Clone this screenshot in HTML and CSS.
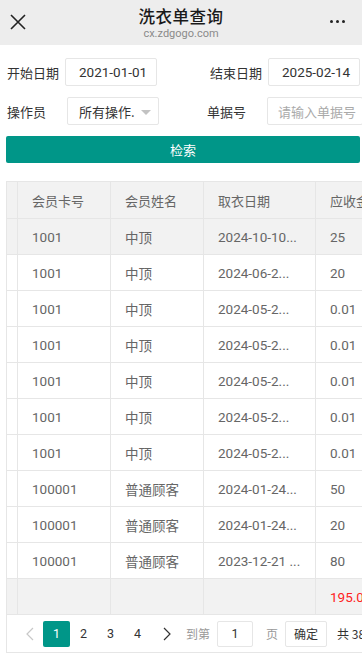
FILE: index.html
```html
<!DOCTYPE html>
<html lang="zh">
<head>
<meta charset="utf-8">
<title>洗衣单查询</title>
<link rel="stylesheet" href="styles.css">
</head>
<body>
<header class="topbar">
  <span class="close">
    <svg width="16" height="16" viewBox="0 0 16 16"><path d="M1 1 L15 15 M15 1 L1 15" stroke="#222" stroke-width="1.6" fill="none"/></svg>
  </span>
  <div class="titles">
    <div class="title">洗衣单查询</div>
    <div class="sub">cx.zdgogo.com</div>
  </div>
  <span class="more"><i></i><i></i><i></i></span>
</header>

<main class="page">
  <div class="form-row">
    <label class="lbl">开始日期</label>
    <div class="field f1">2021-01-01</div>
    <label class="lbl lbl2a">结束日期</label>
    <div class="field f2">2025-02-14</div>
  </div>
  <div class="form-row row2">
    <label class="lbl">操作员</label>
    <div class="field sel">所有操作.<span class="caret"></span></div>
    <label class="lbl lbl2b">单据号</label>
    <div class="field f3 ph">请输入单据号</div>
  </div>
  <button class="btn">检索</button>

  <div class="table-wrap">
    <table class="grid">
      <colgroup><col class="c0"><col class="c1"><col class="c2"><col class="c3"><col class="c4"></colgroup>
      <thead>
        <tr><th></th><th>会员卡号</th><th>会员姓名</th><th>取衣日期</th><th>应收金额</th></tr>
      </thead>
      <tbody>
        <tr class="hover"><td></td><td>1001</td><td>中顶</td><td>2024-10-10...</td><td>25</td></tr>
        <tr><td></td><td>1001</td><td>中顶</td><td>2024-06-2...</td><td>20</td></tr>
        <tr><td></td><td>1001</td><td>中顶</td><td>2024-05-2...</td><td>0.01</td></tr>
        <tr><td></td><td>1001</td><td>中顶</td><td>2024-05-2...</td><td>0.01</td></tr>
        <tr><td></td><td>1001</td><td>中顶</td><td>2024-05-2...</td><td>0.01</td></tr>
        <tr><td></td><td>1001</td><td>中顶</td><td>2024-05-2...</td><td>0.01</td></tr>
        <tr><td></td><td>1001</td><td>中顶</td><td>2024-05-2...</td><td>0.01</td></tr>
        <tr><td></td><td>100001</td><td>普通顾客</td><td>2024-01-24...</td><td>50</td></tr>
        <tr><td></td><td>100001</td><td>普通顾客</td><td>2024-01-24...</td><td>20</td></tr>
        <tr><td></td><td>100001</td><td>普通顾客</td><td>2023-12-21 ...</td><td>80</td></tr>
        <tr class="total"><td></td><td></td><td></td><td></td><td class="red">195.04</td></tr>
      </tbody>
    </table>
    <div class="pager">
      <span class="pg prev">
        <svg width="8" height="14" viewBox="0 0 8 14"><path d="M7 1 L1 7 L7 13" stroke="#c8c8c8" stroke-width="1.2" fill="none"/></svg>
      </span>
      <span class="pg cur">1</span>
      <span class="pg">2</span>
      <span class="pg">3</span>
      <span class="pg">4</span>
      <span class="pg next">
        <svg width="8" height="14" viewBox="0 0 8 14"><path d="M1 1 L7 7 L1 13" stroke="#333" stroke-width="1.2" fill="none"/></svg>
      </span>
      <span class="goto">到第</span>
      <span class="pinput">1</span>
      <span class="goto ye">页</span>
      <span class="ok">确定</span>
      <span class="count">共 38 条</span>
    </div>
  </div>
</main>
</body>
</html>
```
FILE: styles.css
```css
* { box-sizing: border-box; }
html, body { margin: 0; padding: 0; }
body {
  width: 362px;
  height: 656px;
  overflow: hidden;
  background: #fff;
  font-family: Roboto, "Noto Sans CJK SC", sans-serif;
  color: #333;
}
.topbar {
  height: 45px;
  background: #ededed;
  display: flex;
  align-items: center;
  position: relative;
}
.close {
  width: 36px;
  padding-left: 10px;
  display: flex;
  align-items: center;
  margin-top: -1px;
}
.titles {
  flex: 1;
  text-align: center;
  padding-top: 2px;
}
.title {
  font-family: "Noto Sans CJK SC", sans-serif;
  font-size: 16.5px;
  font-weight: 500;
  color: #1a1a1a;
  line-height: 20px;
  letter-spacing: 0.5px;
}
.sub {
  font-size: 11px;
  color: #8a8a8a;
  line-height: 14px;
  margin-top: 1px;
}
.more {
  width: 36px;
  display: flex;
  gap: 3px;
  padding-left: 4px;
  margin-top: -2px;
}
.more i {
  width: 3px; height: 3px; border-radius: 50%;
  background: #222;
  display: block;
}
.page { padding: 0 2px 0 6px; }
.form-row {
  display: flex;
  align-items: center;
  height: 28px;
  margin-top: 13px;
  font-size: 13px;
}
.row2 { margin-top: 11px; }
.lbl {
  font-family: "Noto Sans CJK SC", sans-serif;
  color: #333;
  font-size: 13px;
  width: 59px;
  padding-left: 1px;
  flex-shrink: 0;
  white-space: nowrap;
}
.field {
  flex-shrink: 0;
  height: 28px;
  border: 1px solid #e6e6e6;
  border-radius: 2px;
  display: flex;
  align-items: center;
  padding-left: 13px;
  font-size: 13.5px;
  color: #333;
  background: #fff;
}
.f1 { width: 92px; }
.lbl2a { width: auto; margin-left: 52px; margin-right: 6px; }
.f2 { width: 92px; }
.sel { width: 92px; margin-left: 2px; position: relative; padding-left: 11px; font-family: "Noto Sans CJK SC", sans-serif; font-size: 13px; }
.caret {
  position: absolute;
  right: 7px; top: 12px;
  width: 0; height: 0;
  border-left: 5px solid transparent;
  border-right: 5px solid transparent;
  border-top: 5px solid #c2c2c2;
}
.lbl2b { width: auto; margin-left: 47px; margin-right: 21px; }
.f3 { width: 96px; padding-left: 10px; }
.ph { color: #aaa; font-family: "Noto Sans CJK SC", sans-serif; font-size: 13px; white-space: nowrap; overflow: hidden; }
.btn {
  display: block;
  width: 354px;
  height: 27px;
  margin-top: 11px;
  border: none;
  border-radius: 2px;
  background: #009688;
  color: #fff;
  font-family: "Noto Sans CJK SC", sans-serif;
  font-size: 13px;
  padding: 0;
}
.table-wrap {
  margin-top: 18px;
  width: 356px;
  overflow: hidden;
}
.grid {
  border-collapse: collapse;
  table-layout: fixed;
  width: 400px;
  font-size: 13.5px;
  color: #666;
}
.c0 { width: 11px; }
.c1 { width: 93px; }
.c2 { width: 93px; }
.c3 { width: 112px; }
.c4 { width: 91px; }
.grid th, .grid td {
  border: 1px solid #e6e6e6;
  text-align: left;
  padding: 0 0 0 14px;
  white-space: nowrap;
  overflow: hidden;
  height: 36px;
  font-weight: normal;
}
.grid th:first-child, .grid td:first-child { padding: 0; }
.grid th {
  height: 37px;
  background: #f2f2f2;
  font-family: "Noto Sans CJK SC", sans-serif;
  font-size: 13px;
  color: #666;
}
.grid td { font-family: Roboto, "Noto Sans CJK SC", sans-serif; }
.grid tr.hover td { background: #f2f2f2; }
.grid tr.total td { background: #f2f2f2; }
.red { color: #ff2222; }
.pager {
  width: 400px;
  height: 38px;
  border: 1px solid #e6e6e6;
  border-top: none;
  display: flex;
  align-items: center;
  padding-left: 9px;
  font-size: 12.5px;
  color: #333;
}
.pg {
  flex-shrink: 0;
  min-width: 27px;
  height: 26px;
  display: flex;
  align-items: center;
  justify-content: center;
}
.cur { background: #009688; color: #fff; border-radius: 2px; }
.next { margin-left: 2px; }
.goto {
  flex-shrink: 0;
  font-family: "Noto Sans CJK SC", sans-serif;
  color: #999;
  font-size: 12px;
  margin-left: 6px;
}
.ye { margin-left: 13px; }
.pinput {
  flex-shrink: 0;
  width: 36px;
  height: 26px;
  border: 1px solid #e6e6e6;
  border-radius: 2px;
  margin-left: 7px;
  display: flex;
  align-items: center;
  justify-content: center;
}
.ok {
  flex-shrink: 0;
  height: 26px;
  width: 42px;
  border: 1px solid #e6e6e6;
  border-radius: 2px;
  margin-left: 7px;
  display: flex;
  align-items: center;
  justify-content: center;
  font-family: "Noto Sans CJK SC", sans-serif;
  font-size: 12px;
  color: #333;
}
.count {
  flex-shrink: 0;
  margin-left: 10px;
  font-family: "Noto Sans CJK SC", sans-serif;
  font-size: 12px;
  white-space: nowrap;
}
```
